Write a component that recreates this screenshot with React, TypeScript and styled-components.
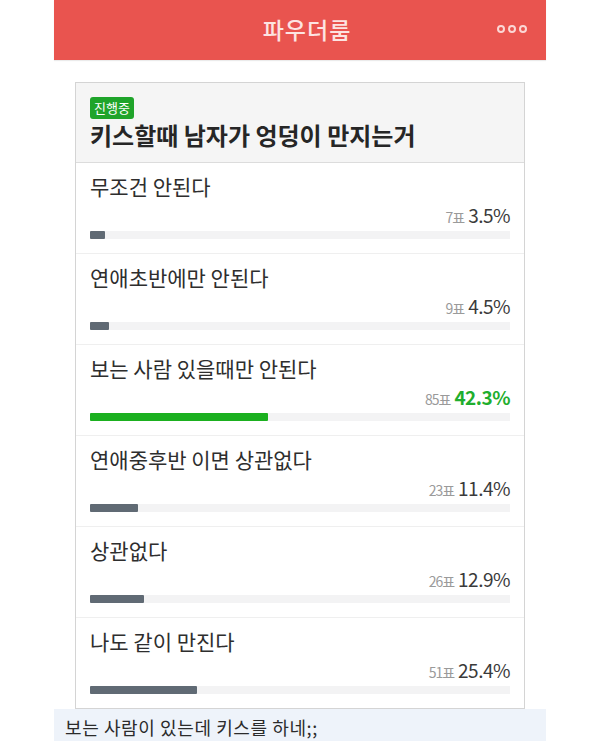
import React from 'react';
import styled, { createGlobalStyle } from 'styled-components';

interface PollOption {
  label: string;
  votes: number;
  percent: number;
}

const options: PollOption[] = [
  { label: '무조건 안된다', votes: 7, percent: 3.5 },
  { label: '연애초반에만 안된다', votes: 9, percent: 4.5 },
  { label: '보는 사람 있을때만 안된다', votes: 85, percent: 42.3 },
  { label: '연애중후반 이면 상관없다', votes: 23, percent: 11.4 },
  { label: '상관없다', votes: 26, percent: 12.9 },
  { label: '나도 같이 만진다', votes: 51, percent: 25.4 },
];

const topPercent = Math.max(...options.map((o) => o.percent));

const GlobalStyle = createGlobalStyle`
  body {
    margin: 0;
    background: #fff;
    font-family: "Noto Sans CJK KR", "Noto Sans", sans-serif;
    color: #333;
  }
`;

const Page = styled.div`
  width: 492px;
  margin: 0 auto;
`;

const Header = styled.header`
  height: 60px;
  background: #e9544f;
  display: grid;
  grid-template-columns: 1fr auto 1fr;
  align-items: center;
  padding: 0 19px 2px;
  box-sizing: border-box;
  box-shadow: 0 1px 1px rgba(0, 0, 0, 0.08);
  h1 {
    grid-column: 2;
    margin: 0 0 0 14px;
    font-size: 23px;
    font-weight: 500;
    color: #fde4e2;
    letter-spacing: 1px;
  }
`;

const Dots = styled.div`
  justify-self: end;
  display: flex;
  gap: 3px;
  span {
    width: 4px;
    height: 4px;
    border: 2px solid #fbd7d5;
    border-radius: 50%;
  }
`;

const Content = styled.main`
  padding: 22px 21px 0;
`;

const Card = styled.section`
  border: 1px solid #d4d4d4;
`;

const CardHeader = styled.div`
  background: #f5f5f5;
  border-bottom: 1px solid #dcdcdc;
  padding: 14px 14px 13px;
  h2 {
    margin: 2px 0 0;
    font-size: 24px;
    font-weight: 700;
    line-height: 28px;
    color: #262626;
  }
`;

const Badge = styled.div`
  width: fit-content;
  height: 22px;
  line-height: 22px;
  padding: 0 4px;
  border-radius: 3px;
  background: #1fa42a;
  color: #fff;
  font-size: 13px;
`;

const Row = styled.div`
  padding: 10px 14px 14px;
  border-top: 1px solid #efefef;
  &:first-child {
    border-top: none;
  }
`;

const Label = styled.div`
  font-size: 21px;
  line-height: 26px;
  color: #2e2e2e;
`;

const Result = styled.div<{ $top: boolean }>`
  margin-top: 5px;
  height: 22px;
  display: flex;
  justify-content: flex-end;
  align-items: baseline;
  small {
    font-size: 14px;
    line-height: 22px;
    color: #9a9a9a;
    letter-spacing: -1px;
    margin-right: 4px;
  }
  strong {
    font-size: 19px;
    line-height: 22px;
    letter-spacing: -0.5px;
    font-weight: ${(p) => (p.$top ? 700 : 400)};
    color: ${(p) => (p.$top ? '#1fae2e' : '#3a3a3a')};
  }
`;

const Track = styled.div`
  margin-top: 5px;
  height: 8px;
  background: #f3f3f4;
`;

const Fill = styled.div<{ $top: boolean }>`
  height: 100%;
  border-radius: 1px;
  background: ${(p) => (p.$top ? '#1bb01f' : '#606a74')};
`;

const Comment = styled.div`
  background: #eef3fa;
  padding: 6px 11px 0;
  height: 34px;
  box-sizing: border-box;
  font-size: 18px;
  line-height: 24px;
  letter-spacing: 0.6px;
  color: #2b2b2b;
`;

const App = () => {
  return (
    <Page>
      <GlobalStyle />
      <Header>
        <h1>파우더룸</h1>
        <Dots>
          <span />
          <span />
          <span />
        </Dots>
      </Header>
      <Content>
        <Card>
          <CardHeader>
            <Badge>진행중</Badge>
            <h2>키스할때 남자가 엉덩이 만지는거</h2>
          </CardHeader>
          <div>
            {options.map((o) => {
              const top = o.percent === topPercent;
              return (
                <Row key={o.label}>
                  <Label>{o.label}</Label>
                  <Result $top={top}>
                    <small>{o.votes}표</small>
                    <strong>{o.percent}%</strong>
                  </Result>
                  <Track>
                    <Fill $top={top} style={{ width: `${o.percent}%` }} />
                  </Track>
                </Row>
              );
            })}
          </div>
        </Card>
      </Content>
      <Comment>보는 사람이 있는데 키스를 하네;;</Comment>
    </Page>
  );
};

export default App;
